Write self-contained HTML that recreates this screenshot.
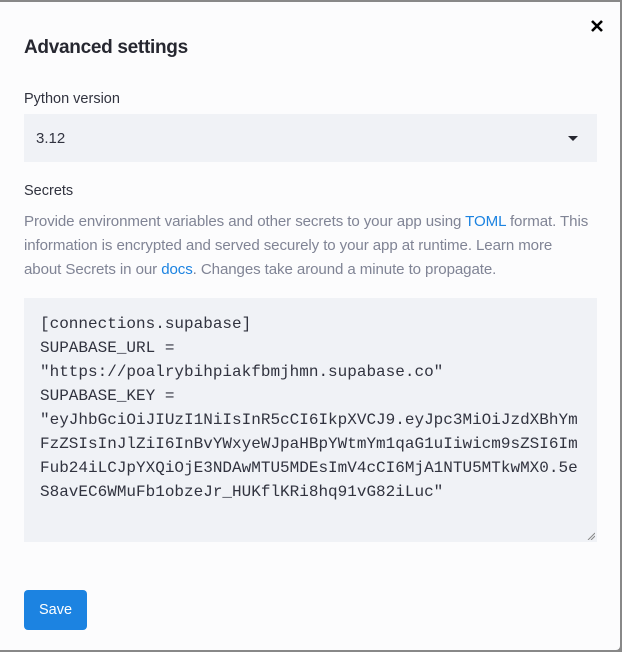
<!DOCTYPE html>
<html><head><style>
html,body{margin:0;padding:0;width:622px;height:652px;overflow:hidden;background:#888;}
.modal{position:absolute;left:0;top:2px;width:620px;height:648px;background:#fcfcfd;border-radius:0 0 4px 0;font-family:"Liberation Sans",sans-serif;color:#31333f;}
.close{position:absolute;left:589px;top:16px;width:16px;height:16px;}
h1{position:absolute;left:24px;top:35px;margin:0;font-size:19px;font-weight:bold;color:#262730;letter-spacing:-0.3px;}
.lbl{position:absolute;left:24px;font-size:14.5px;color:#31333f;}
.sel{position:absolute;left:24px;top:112px;width:573px;height:48px;background:#f0f2f6;}
.sel span{position:absolute;left:12px;top:16px;font-size:15px;}
.caret{position:absolute;left:544px;top:22px;width:0;height:0;border-left:5px solid transparent;border-right:5px solid transparent;border-top:5px solid #262730;}
.p{position:absolute;left:24px;top:208px;width:568px;font-size:15.1px;line-height:24px;color:#808495;letter-spacing:-0.1px;}
.p a{color:#1c83e1;text-decoration:none;}
.ta{position:absolute;left:24px;top:296px;width:573px;height:244px;background:#f0f2f6;}
.ta pre{position:absolute;left:16px;top:14px;margin:0;font-family:"Liberation Mono",monospace;font-size:16px;line-height:24px;color:#31333f;}
.btn{position:absolute;left:24px;top:588px;width:63px;height:40px;background:#1c83e1;border-radius:4px;color:#fff;font-size:14.5px;text-align:center;line-height:40px;}
</style></head><body>
<div class="modal">
<svg class="close" viewBox="0 0 16 16"><path d="M3 3L13 13M13 3L3 13" stroke="#000" stroke-width="2.6"/></svg>
<h1>Advanced settings</h1>
<div class="lbl" style="top:89px">Python version</div>
<div class="sel"><span>3.12</span><div class="caret"></div></div>
<div class="lbl" style="top:181px">Secrets</div>
<div class="p">Provide environment variables and other secrets to your app using <a>TOML</a> format. This information is encrypted and served securely to your app at runtime. Learn more about Secrets in our <a>docs</a>. Changes take around a minute to propagate.</div>
<div class="ta"><pre>[connections.supabase]
SUPABASE_URL =
"https://poalrybihpiakfbmjhmn.supabase.co"
SUPABASE_KEY =
"eyJhbGciOiJIUzI1NiIsInR5cCI6IkpXVCJ9.eyJpc3MiOiJzdXBhYm
FzZSIsInJlZiI6InBvYWxyeWJpaHBpYWtmYm1qaG1uIiwicm9sZSI6Im
Fub24iLCJpYXQiOjE3NDAwMTU5MDEsImV4cCI6MjA1NTU5MTkwMX0.5e
S8avEC6WMuFb1obzeJr_HUKflKRi8hq91vG82iLuc"</pre>
<svg style="position:absolute;right:2px;bottom:2px" width="8" height="8"><path d="M1 8L8 1M4 8L8 4" stroke="#888" stroke-width="1"/></svg></div>
<div class="btn">Save</div>
</div>
</body></html>
